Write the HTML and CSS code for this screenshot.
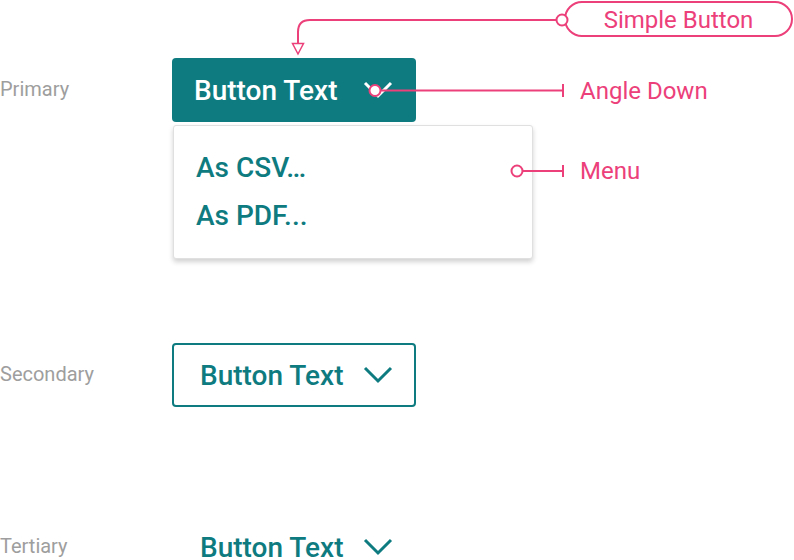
FILE: index.html
```html
<!DOCTYPE html>
<html>
<head>
<meta charset="utf-8">
<link rel="stylesheet" href="styles.css">
</head>
<body>
<div class="page">
  <section class="row row-primary">
    <div class="label">Primary</div>
    <div class="col">
      <div class="btn btn-primary">
        <span>Button Text</span>
        <svg class="chev" viewBox="0 0 30 18" width="30" height="18"><polyline points="2,2 15,15 28,2"/></svg>
      </div>
      <div class="menu">
        <div class="item">As CSV…</div>
        <div class="item">As PDF...</div>
      </div>
    </div>
  </section>
  <section class="row row-secondary">
    <div class="label">Secondary</div>
    <div class="col">
      <div class="btn btn-secondary">
        <span>Button Text</span>
        <svg class="chev" viewBox="0 0 30 18" width="30" height="18"><polyline points="2,2 15,15 28,2"/></svg>
      </div>
    </div>
  </section>
  <section class="row row-tertiary">
    <div class="label">Tertiary</div>
    <div class="col">
      <div class="btn btn-tertiary">
        <span>Button Text</span>
        <svg class="chev" viewBox="0 0 30 18" width="30" height="18"><polyline points="2,2 15,15 28,2"/></svg>
      </div>
    </div>
  </section>

  <div class="pill">Simple Button</div>
  <div class="note note-angle">Angle Down</div>
  <div class="note note-menu">Menu</div>
  <svg class="annot" width="794" height="560" viewBox="0 0 794 560">
    <path class="ln" d="M556 20 H310 Q298 20 298 32 V43"/>
    <polygon class="arrow" points="292.5,43.5 303.5,43.5 298,54"/>
    <circle class="dot" cx="562" cy="20" r="5.5"/>
    <path class="ln" d="M381 90.5 H563 M563 84 V97"/>
    <circle class="dot" cx="375" cy="90.5" r="5.5"/>
    <path class="ln" d="M523 171 H563 M563 165 V177"/>
    <circle class="dot" cx="517" cy="171" r="5.5"/>
  </svg>
</div>
</body>
</html>
```
FILE: styles.css
```css
html, body {
  margin: 0;
  padding: 0;
  background: #ffffff;
}
.page {
  position: relative;
  width: 794px;
  height: 560px;
  overflow: hidden;
  font-family: Roboto, "Liberation Sans", sans-serif;
}
.row {
  display: flex;
  align-items: flex-start;
}
.row-primary { padding-top: 58px; }
.row-secondary { margin-top: 84px; }
.row-tertiary { margin-top: 108px; }
.label {
  width: 172px;
  flex: none;
  height: 63px;
  line-height: 63px;
  font-size: 20px;
  color: #9e9e9e;
}
.col {
  display: flex;
  flex-direction: column;
}
.btn {
  box-sizing: border-box;
  width: 244px;
  height: 64px;
  display: flex;
  align-items: center;
  border-radius: 4px;
  font-size: 28px;
  font-weight: 500;
  color: #0e7b80;
}
.btn .chev {
  margin-left: auto;
  fill: none;
  stroke: currentColor;
  stroke-width: 3;
}
.btn-primary {
  background: #0e7b80;
  color: #ffffff;
  padding-left: 22px;
  padding-right: 23px;
}
.btn-secondary {
  border: 2px solid #0e7b80;
  padding-left: 26px;
  padding-right: 21px;
}
.btn-tertiary {
  padding-left: 28px;
  padding-right: 23px;
}
.menu {
  box-sizing: border-box;
  margin-top: 3px;
  margin-left: 1px;
  width: 360px;
  padding: 18px 0;
  background: #ffffff;
  border: 1px solid #e0e0e0;
  border-radius: 3px;
  box-shadow: 0 3px 5px rgba(0, 0, 0, 0.18);
}
.item {
  height: 48px;
  line-height: 48px;
  padding-left: 22px;
  font-size: 28px;
  font-weight: 500;
  color: #0e7b80;
}
.pill {
  position: absolute;
  left: 564px;
  top: 1px;
  box-sizing: border-box;
  width: 229px;
  height: 36px;
  border: 2px solid #ec407a;
  border-radius: 18px;
  text-align: center;
  line-height: 35px;
  font-size: 24px;
  color: #ec407a;
}
.note {
  position: absolute;
  left: 580px;
  font-size: 24px;
  line-height: 30px;
  color: #ec407a;
}
.note-angle { top: 76px; }
.note-menu { top: 156px; }
.annot {
  position: absolute;
  left: 0;
  top: 0;
  pointer-events: none;
}
.ln {
  fill: none;
  stroke: #ec407a;
  stroke-width: 2;
}
.arrow {
  fill: #ffffff;
  stroke: #ec407a;
  stroke-width: 1.5;
}
.dot {
  fill: #ffffff;
  stroke: #ec407a;
  stroke-width: 2;
}
```
